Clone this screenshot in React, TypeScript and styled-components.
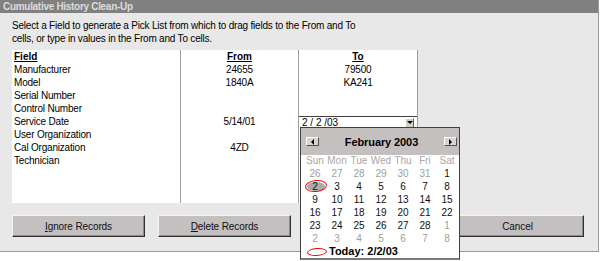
import * as React from "react";
import styled, { createGlobalStyle } from "styled-components";

const GlobalStyle = createGlobalStyle`
  html, body {
    margin: 0;
    padding: 0;
    background: #ffffff;
  }
  html, body, #root {
    height: 261px;
  }
  body {
    font-family: "Liberation Sans", Arial, sans-serif;
    font-size: 10px;
    color: #000000;
  }
  * {
    box-sizing: border-box;
  }
`;

const Window = styled.div`
  width: 599px;
  height: 252px;
  background: #e8e8e8;
  border-right: 1px solid #9c9c9c;
  border-bottom: 1px solid #9c9c9c;
  display: flex;
  flex-direction: column;
`;

const TitleBar = styled.div`
  height: 13px;
  line-height: 13px;
  padding-left: 3px;
  background: #808080;
  color: #dcdcdc;
  font-weight: bold;
  letter-spacing: -0.3px;
`;

const Content = styled.div`
  padding: 6px 14px 0 12px;
  display: flex;
  flex-direction: column;
`;

const Instructions = styled.p`
  margin: 0 0 5px;
  line-height: 13px;
  letter-spacing: -0.2px;
`;

const Grid = styled.div`
  display: flex;
  width: 406px;
  height: 153px;
  background: #ffffff;
`;

const Column = styled.div<{ $width: number; $align: "left" | "center" }>`
  width: ${(p) => p.$width}px;
  border-right: 1px solid #a0a0a0;
  display: flex;
  flex-direction: column;
  text-align: ${(p) => p.$align};
`;

const Cell = styled.div`
  height: 13px;
  line-height: 13px;
  padding: 0 2px;
  letter-spacing: -0.2px;
  white-space: nowrap;
`;

const HeaderCell = styled(Cell)`
  font-weight: bold;
  text-decoration: underline;
  letter-spacing: 0;
`;

const Combo = styled.div`
  position: relative;
  height: 13px;
  padding-top: 1px;
`;

const ComboField = styled.div`
  height: 12px;
  line-height: 11px;
  border-top: 1px solid #404040;
  background: #ffffff;
  padding-left: 3px;
  text-align: left;
  display: flex;
  justify-content: space-between;
  align-items: center;
`;

const DropButton = styled.span`
  width: 9px;
  height: 10px;
  margin-right: 3px;
  background: #d4d0c8;
  border: 1px solid;
  border-color: #ffffff #606060 #606060 #ffffff;
  display: flex;
  align-items: center;
  justify-content: center;
`;

const Calendar = styled.div`
  position: absolute;
  top: 12px;
  left: 1px;
  width: 160px;
  height: 133px;
  background: #ffffff;
  border: 1px solid #404040;
  border-bottom: 2px solid #7a7a7a;
  display: flex;
  flex-direction: column;
  text-align: center;
  z-index: 2;

  & > * {
    flex-shrink: 0;
  }
`;

const CalHeader = styled.div`
  height: 27px;
  background: #c4c0c0;
  display: flex;
  align-items: center;
  justify-content: space-between;
  padding: 0 2px 0 5px;
`;

const NavButton = styled.span`
  width: 13px;
  height: 9px;
  background: #d8d4d4;
  border: 1px solid;
  border-color: #ffffff #505050 #505050 #ffffff;
  display: flex;
  align-items: center;
  justify-content: center;
`;

const MonthTitle = styled.span`
  font-weight: bold;
  font-size: 11px;
  letter-spacing: -0.1px;
`;

const WeekGrid = styled.div<{ $muted?: boolean }>`
  display: grid;
  grid-template-columns: repeat(7, 22px);
  grid-auto-rows: ${(p) => (p.$muted ? "12px" : "13px")};
  padding-left: 3px;
  line-height: ${(p) => (p.$muted ? "12px" : "13px")};
  color: ${(p) => (p.$muted ? "#a8a8a8" : "#000000")};
`;

const DayCell = styled.span<{ $other?: boolean; $selected?: boolean }>`
  position: relative;
  color: ${(p) => (p.$other ? "#a0a0a0" : "#101010")};

  ${(p) =>
    p.$selected &&
    `
    &::before {
      content: "";
      position: absolute;
      left: 3px;
      right: 1px;
      top: 2px;
      bottom: 2px;
      border-radius: 50%;
      background: #aaaaaa;
      z-index: -1;
    }
    &::after {
      content: "";
      position: absolute;
      left: 1px;
      right: -1px;
      top: 0px;
      bottom: 1px;
      border: 1.5px solid #e01010;
      border-radius: 50%;
      transform: rotate(-6deg);
    }
  `}
`;

const DaysWrap = styled.div`
  position: relative;
  z-index: 0;
`;

const TodayRow = styled.div`
  height: 13px;
  line-height: 13px;
  display: flex;
  align-items: center;
  gap: 2px;
  padding-left: 6px;
  font-weight: bold;
  font-size: 11px;
`;

const TodayMark = styled.span`
  width: 20px;
  height: 8px;
  border: 1.5px solid #e01010;
  border-radius: 50%;
  transform: rotate(-4deg);
`;

const ButtonRow = styled.div`
  display: flex;
  gap: 13px;
  margin-top: 12px;
`;

const Button = styled.button<{ $push?: boolean }>`
  width: 133px;
  height: 22px;
  padding: 0;
  margin-left: ${(p) => (p.$push ? "auto" : "0")};
  background: #c4c0c0;
  border: 1px solid;
  border-color: #f4f4f4 #303030 #303030 #f4f4f4;
  box-shadow: inset -1px -1px #8a8a8a;
  font-family: "Liberation Sans", Arial, sans-serif;
  font-size: 10px;
  letter-spacing: -0.1px;
  color: #101010;
`;

type Row = { field: string; from?: string; to?: string; date?: boolean };

const rows: Row[] = [
  { field: "Manufacturer", from: "24655", to: "79500" },
  { field: "Model", from: "1840A", to: "KA241" },
  { field: "Serial Number" },
  { field: "Control Number" },
  { field: "Service Date", from: "5/14/01", date: true },
  { field: "User Organization" },
  { field: "Cal Organization", from: "4ZD" },
  { field: "Technician" },
];

const dayNames = ["Sun", "Mon", "Tue", "Wed", "Thu", "Fri", "Sat"];

type Day = { n: number; other: boolean };

const buildDays = (): Day[] => {
  const days: Day[] = [];
  [26, 27, 28, 29, 30, 31].forEach((n) => days.push({ n, other: true }));
  for (let n = 1; n <= 28; n++) days.push({ n, other: false });
  for (let n = 1; n <= 8; n++) days.push({ n, other: true });
  return days;
};

const Arrow = ({ dir }: { dir: "left" | "right" | "down" }) => {
  const points =
    dir === "left" ? "4,0 4,6 1,3" : dir === "right" ? "1,0 1,6 4,3" : "0,1 6,1 3,4";
  const w = dir === "down" ? 6 : 5;
  const h = dir === "down" ? 5 : 6;
  return (
    <svg width={w} height={h} viewBox={`0 0 ${w} ${h}`}>
      <polygon points={points} fill="#000000" />
    </svg>
  );
};

const DateCombo = () => {
  const days = buildDays();
  return (
    <Combo>
      <ComboField>
        <span>2 / 2 /03</span>
        <DropButton>
          <Arrow dir="down" />
        </DropButton>
      </ComboField>
      <Calendar>
        <CalHeader>
          <NavButton>
            <Arrow dir="left" />
          </NavButton>
          <MonthTitle>February 2003</MonthTitle>
          <NavButton>
            <Arrow dir="right" />
          </NavButton>
        </CalHeader>
        <WeekGrid $muted>
          {dayNames.map((d) => (
            <span key={d}>{d}</span>
          ))}
        </WeekGrid>
        <DaysWrap>
          <WeekGrid>
            {days.map((d, i) => (
              <DayCell key={i} $other={d.other} $selected={!d.other && d.n === 2}>
                {d.n}
              </DayCell>
            ))}
          </WeekGrid>
        </DaysWrap>
        <TodayRow>
          <TodayMark />
          <span>Today: 2/2/03</span>
        </TodayRow>
      </Calendar>
    </Combo>
  );
};

export default function App() {
  return (
    <>
      <GlobalStyle />
      <Window>
        <TitleBar>Cumulative History Clean-Up</TitleBar>
        <Content>
          <Instructions>
            Select a Field to generate a Pick List from which to drag fields to the From and To
            <br />
            cells, or type in values in the From and To cells.
          </Instructions>
          <Grid>
            <Column $width={169} $align="left">
              <HeaderCell>Field</HeaderCell>
              {rows.map((r) => (
                <Cell key={r.field}>{r.field}</Cell>
              ))}
            </Column>
            <Column $width={118} $align="center">
              <HeaderCell>From</HeaderCell>
              {rows.map((r) => (
                <Cell key={r.field}>{r.from}</Cell>
              ))}
            </Column>
            <Column $width={119} $align="center">
              <HeaderCell>To</HeaderCell>
              {rows.map((r) =>
                r.date ? <DateCombo key={r.field} /> : <Cell key={r.field}>{r.to}</Cell>
              )}
            </Column>
          </Grid>
          <ButtonRow>
            <Button>
              <u>I</u>gnore Records
            </Button>
            <Button>
              <u>D</u>elete Records
            </Button>
            <Button $push>Cancel</Button>
          </ButtonRow>
        </Content>
      </Window>
    </>
  );
}
